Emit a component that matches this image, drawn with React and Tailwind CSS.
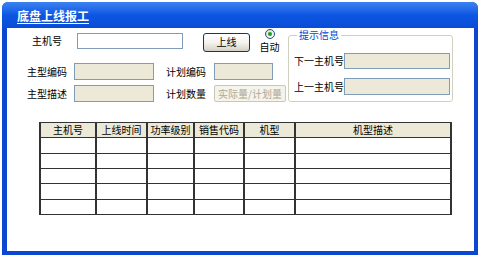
import React from "react";

const font = { fontFamily: '"Noto Sans CJK SC", "Noto Sans", sans-serif' };

function Label({ children, w, ml = "" }) {
  return (
    <div className={`${w} ${ml} text-center text-[10px] leading-[12px] text-black shrink-0 whitespace-nowrap`}>{children}</div>
  );
}

function BeigeInput({ cls }) {
  return <div className={`${cls} shrink-0 bg-[#ece9d8] border border-[#7f9db9]`} />;
}

const cols = [
  { t: "主机号", w: "w-[56px]" },
  { t: "上线时间", w: "w-[51px]" },
  { t: "功率级别", w: "w-[47px]" },
  { t: "销售代码", w: "w-[50px]" },
  { t: "机型", w: "w-[51px]" },
  { t: "机型描述", w: "w-[156px]" },
];

const rowHeights = ["h-[16px]", "h-[15px]", "h-[15px]", "h-[16px]", "h-[15px]"];

export default function App() {
  return (
    <div className="w-[482px] h-[258px] bg-white pt-[2px] pl-[2px]" style={font}>
      <div className="w-[476px] h-[253px] flex flex-col rounded-t-[6px] overflow-hidden bg-[#0b47d1]">
        <div className="h-[26px] shrink-0 flex items-center pl-[15px] bg-gradient-to-b from-[#3d82f2] via-[#0c56e2] to-[#0a4cd6]">
          <span className="text-white font-bold text-[12px] leading-[14px] underline underline-offset-[2px] decoration-[1px] mt-[2px]">
            底盘上线报工
          </span>
        </div>
        <div className="flex-1 bg-white ml-[5px] mr-[4px] mb-[4px] flex flex-col">
          <div className="flex">
            <div className="w-[259px] ml-[20px] flex flex-col shrink-0">
              <div className="h-[25px] flex items-center">
                <Label w="w-[40px]">主机号</Label>
                <div className="ml-[10px] w-[106px] h-[16px] bg-white border border-[#7f9db9] shrink-0" />
                <div className="ml-[20px] w-[47px] h-[19px] mt-[3px] shrink-0 rounded-[3px] border border-[#003c74] bg-gradient-to-b from-white via-[#f4f3ee] to-[#d6d0c5] flex items-center justify-center text-[10px] leading-[12px] text-black">
                  上线
                </div>
                <div className="ml-[9px] w-[21px] h-[25px] flex flex-col items-center shrink-0">
                  <div className="w-[10px] h-[10px] mt-[1px] rounded-full border border-[#1c5180] bg-gradient-to-br from-[#dcdcd7] to-white flex items-center justify-center">
                    <div className="w-[4px] h-[4px] rounded-full bg-[#21a121]" />
                  </div>
                  <div className="mt-[2px] text-[10px] leading-[12px] text-black whitespace-nowrap">自动</div>
                </div>
              </div>
              <div className="mt-[10px] h-[17px] flex items-center">
                <Label w="w-[40px]">主型编码</Label>
                <BeigeInput cls="ml-[7px] w-[80px] h-[17px]" />
                <Label w="w-[40px]" ml="ml-[12px]">计划编码</Label>
                <BeigeInput cls="ml-[8px] w-[59px] h-[17px]" />
              </div>
              <div className="mt-[5px] h-[17px] flex items-center">
                <Label w="w-[40px]">主型描述</Label>
                <BeigeInput cls="ml-[7px] w-[80px] h-[17px]" />
                <Label w="w-[40px]" ml="ml-[12px]">计划数量</Label>
                <div className="ml-[8px] w-[72px] h-[17px] shrink-0 rounded-[2px] border border-[#c9c7ba] bg-[#f5f4ea] flex items-center justify-center text-[10px] leading-[12px] text-[#aca899] whitespace-nowrap">
                  实际量/计划量
                </div>
              </div>
            </div>
            <div className="relative ml-[2px] mt-[7px] w-[165px] h-[67px] shrink-0 rounded-[3px] border border-[#d0d0bf] pl-[5px]">
              <span className="absolute left-[8px] -top-[7px] bg-white px-[2px] text-[10px] leading-[12px] text-[#0046d5] whitespace-nowrap">
                提示信息
              </span>
              <div className="mt-[17px] flex items-center h-[16px]">
                <div className="w-[50px] text-[10px] leading-[12px] text-black whitespace-nowrap">下一主机号</div>
                <BeigeInput cls="w-[106px] h-[16px]" />
              </div>
              <div className="mt-[9px] flex items-center h-[17px]">
                <div className="w-[50px] text-[10px] leading-[12px] text-black whitespace-nowrap">上一主机号</div>
                <BeigeInput cls="w-[106px] h-[17px]" />
              </div>
            </div>
          </div>
          <div className="mt-[20px] ml-[32px] w-[413px] border-t border-l-2 border-[#333]">
            <div className="flex h-[15px] bg-[#ece9d8]">
              {cols.map((c) => (
                <div
                  key={c.t}
                  className={`${c.w} shrink-0 border-r-2 border-b border-[#333] flex items-center justify-center text-[10px] leading-[12px] text-black whitespace-nowrap`}
                >
                  {c.t}
                </div>
              ))}
            </div>
            {rowHeights.map((h, i) => (
              <div key={i} className={`flex ${h}`}>
                {cols.map((c) => (
                  <div key={c.t} className={`${c.w} shrink-0 border-r-2 border-b border-[#333] bg-white`} />
                ))}
              </div>
            ))}
          </div>
        </div>
      </div>
    </div>
  );
}
